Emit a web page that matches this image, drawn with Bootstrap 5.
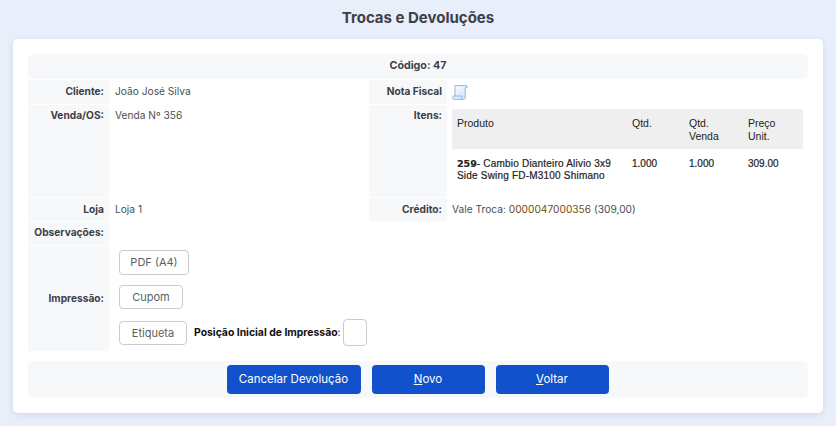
<!DOCTYPE html>
<html lang="pt-BR">
<head>
<meta charset="utf-8">
<title>Trocas e Devoluções</title>
<link href="https://cdn.jsdelivr.net/npm/bootstrap@5.3.0/dist/css/bootstrap.min.css" rel="stylesheet">
<style>
html,body{height:100%}
body{background:#e8eefa;font-family:Inter,"Liberation Sans",sans-serif;font-size:10.2px;color:#3d4147;overflow:hidden}
.page-title{font-size:15px;font-weight:700;color:#3d4147;height:39px;line-height:35px;margin:0;text-align:center}
.sheet{margin:0 13px;height:374px;background:#fff;border-radius:5px;padding:15px;box-shadow:0 2px 6px rgba(60,80,120,.12)}
.info-grid{display:grid;grid-template-columns:81px 260px 78px 361px;grid-template-rows:25px 24px 92px 23px 23px 105px;row-gap:1px}
.code-row{grid-column:1/5;background:#f7f8fa;border-radius:5px;display:flex;align-items:center;justify-content:center;font-weight:700;font-size:10.7px}
.lbl{background:#f7f8fa;text-align:right;font-weight:700;padding:4px 5px 0 0;line-height:15px;color:#3d4147}
.val{padding:4px 0 0 6px;line-height:15px;color:#4a4e54}
.val-wide{grid-column:2/5}
.val-b{padding-left:5px}
.tight{padding-top:3px}
.lbl-mid{display:flex;align-items:center;justify-content:flex-end;padding-top:0}
.prod-table{width:351px;margin-top:0;font-family:"Liberation Sans",Arial,sans-serif;font-size:10.5px;line-height:13px;color:#222;table-layout:fixed;border-collapse:collapse}
.prod-table th{background:#efefef;font-weight:400;height:40px;vertical-align:top;padding:8px 5px 0}
.prod-table td{vertical-align:top;padding:8px 5px 0;font-size:10px;-webkit-text-stroke:.2px #222}
.prod-table td.prod-name{line-height:12px;padding-top:9px;letter-spacing:.2px}
.prod-name b{font-family:"DejaVu Sans",sans-serif;font-size:9.5px;letter-spacing:0}
.item-wrap{padding:4px 0 0 5px}
.print-cell{padding:4px 0 0 10px}
.ghost-btn{display:inline-block;background:#fff;border:1px solid #c9cbcd;border-radius:4px;color:#5a5f66;font-size:11px;height:25px;line-height:23px;text-align:center;padding:0}
.w1{width:70px}.w2{width:64px;height:24px;margin-top:10px}.w3{width:68px;height:24px}
.print-line{display:flex;align-items:center;margin-top:10px;height:27px}
.pos-label{font-size:10.4px;font-weight:700;color:#111;margin-left:7px;white-space:nowrap;width:149px}
.pos-label span{font-weight:400}
.pos-input{width:24px;height:27px;border:1px solid #c9cbcd;border-radius:4px;background:#fff;padding:0}
.action-bar{margin-top:10px;height:37px;background:#f7f8fa;border-radius:5px;display:flex;align-items:center;justify-content:center;gap:11px;padding-right:1px}
.act-btn{background:#1152cc;border:0;border-radius:4px;color:#fff;font-size:11.5px;height:29px;padding:0;width:113px}
.act-btn.wide{width:134px}
.act-btn:hover{background:#1152cc;color:#fff}
</style>
</head>
<body>
<h1 class="page-title">Trocas e Devoluções</h1>
<main class="sheet">
  <div class="info-grid">
    <div class="code-row">Código: 47</div>

    <div class="lbl">Cliente:</div>
    <div class="val">João José Silva</div>
    <div class="lbl">Nota Fiscal</div>
    <div class="val val-b">
      <svg width="16" height="15" viewBox="0 0 16 15" aria-hidden="true"><defs><linearGradient id="sc" x1="0" y1="0" x2="1" y2="1"><stop offset="0" stop-color="#fbfdff"/><stop offset="1" stop-color="#cfe2f9"/></linearGradient></defs><path d="M3 .6H14c.9 0 1.400.5 1.400 1.100S14.900 2.800 14 2.800H13.200V12.400c0 1.100-.7 1.900-1.700 1.900H2.100C1 14.300.4 13.600.4 12.700S1 11 2.100 11H3V.6Z" fill="url(#sc)" stroke="#7fb0e6" stroke-width=".9"/><path d="M2.100 11H10.300c-.7.8-.7 2.400.2 3.300" fill="none" stroke="#7fb0e6" stroke-width=".8"/></svg>
    </div>

    <div class="lbl tight">Venda/OS:</div>
    <div class="val tight">Venda Nº 356</div>
    <div class="lbl tight">Itens:</div>
    <div class="item-wrap">
      <table class="prod-table">
        <colgroup><col style="width:175px"><col style="width:57px"><col style="width:59px"><col style="width:60px"></colgroup>
        <thead><tr><th>Produto</th><th>Qtd.</th><th>Qtd. Venda</th><th>Preço Unit.</th></tr></thead>
        <tbody><tr><td class="prod-name"><b>259</b>- Cambio Dianteiro Alivio 3x9 Side Swing FD-M3100 Shimano</td><td>1.000</td><td>1.000</td><td>309.00</td></tr></tbody>
      </table>
    </div>

    <div class="lbl">Loja</div>
    <div class="val">Loja 1</div>
    <div class="lbl">Crédito:</div>
    <div class="val val-b">Vale Troca: <span style="color:#7a4a12">0000047000356</span> (309,00)</div>

    <div class="lbl tight">Observações:</div>
    <div class="val val-wide"></div>

    <div class="lbl lbl-mid">Impressão:</div>
    <div class="print-cell val-wide">
      <div><button type="button" class="ghost-btn w1">PDF (A4)</button></div>
      <div><button type="button" class="ghost-btn w2">Cupom</button></div>
      <div class="print-line">
        <button type="button" class="ghost-btn w3">Etiqueta</button>
        <label class="pos-label" for="pos">Posição Inicial de Impressão<span>:</span></label>
        <input id="pos" class="pos-input" type="text">
      </div>
    </div>
  </div>
  <div class="action-bar">
    <button type="button" class="btn act-btn wide">Cancelar Devolução</button>
    <button type="button" class="btn act-btn"><u>N</u>ovo</button>
    <button type="button" class="btn act-btn"><u>V</u>oltar</button>
  </div>
</main>
<script src="https://cdn.jsdelivr.net/npm/bootstrap@5.3.0/dist/js/bootstrap.bundle.min.js"></script>
</body>
</html>
